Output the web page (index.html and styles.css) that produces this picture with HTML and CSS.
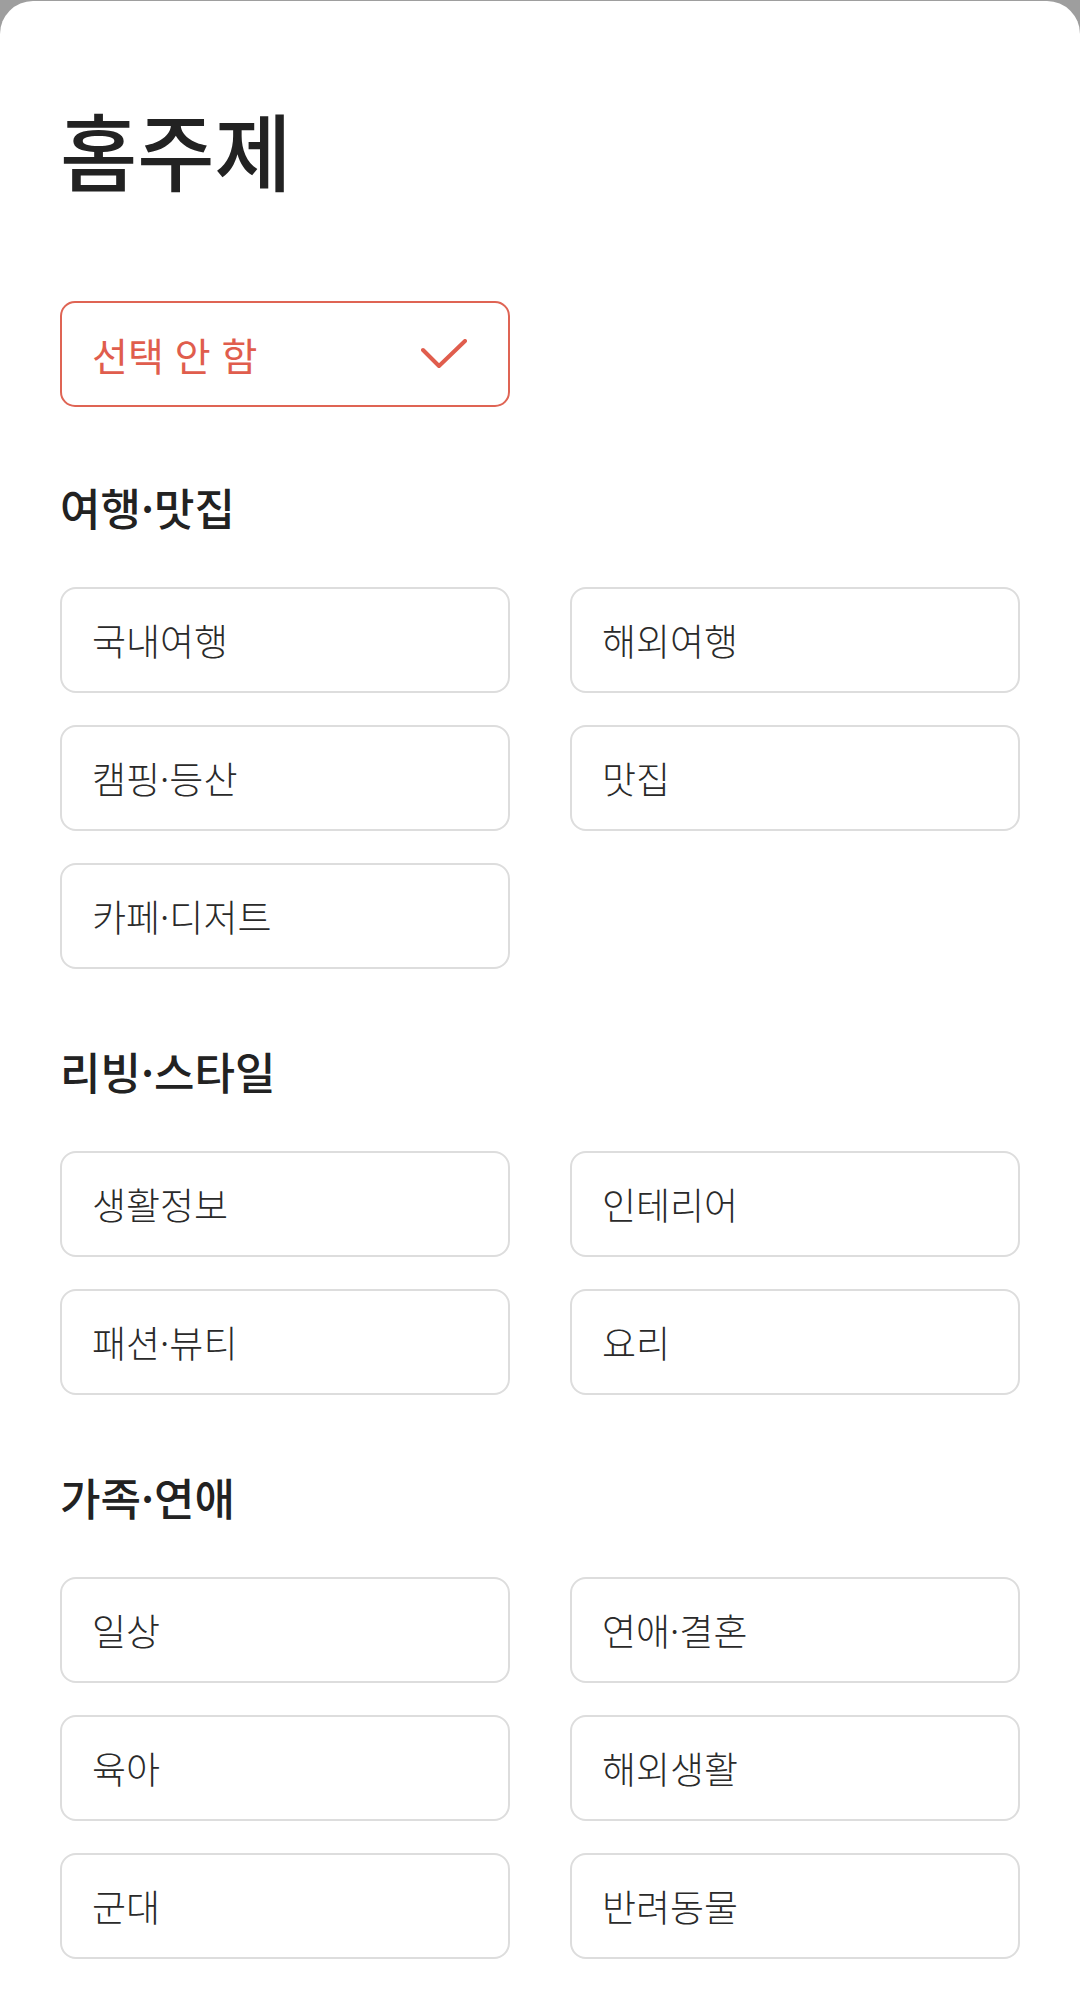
FILE: index.html
```html
<!DOCTYPE html>
<html lang="ko">
<head>
<meta charset="utf-8">
<title>홈주제</title>
<link rel="stylesheet" href="styles.css">
</head>
<body>
<div class="sheet">
  <h1 class="title">홈주제</h1>

  <div class="select is-selected">
    <span class="select-label">선택 안 함</span>
    <svg class="check" width="46" height="31" viewBox="0 0 46 31"><path d="M2 11 L18 27 L44 2" fill="none" stroke="#e05d4d" stroke-width="4" stroke-linecap="round" stroke-linejoin="round"/></svg>
  </div>

  <section class="group">
    <h2 class="group-title">여행·맛집</h2>
    <div class="grid">
      <div class="chip">국내여행</div>
      <div class="chip">해외여행</div>
      <div class="chip">캠핑·등산</div>
      <div class="chip">맛집</div>
      <div class="chip">카페·디저트</div>
    </div>
  </section>

  <section class="group">
    <h2 class="group-title">리빙·스타일</h2>
    <div class="grid">
      <div class="chip">생활정보</div>
      <div class="chip">인테리어</div>
      <div class="chip">패션·뷰티</div>
      <div class="chip">요리</div>
    </div>
  </section>

  <section class="group">
    <h2 class="group-title">가족·연애</h2>
    <div class="grid">
      <div class="chip">일상</div>
      <div class="chip">연애·결혼</div>
      <div class="chip">육아</div>
      <div class="chip">해외생활</div>
      <div class="chip">군대</div>
      <div class="chip">반려동물</div>
    </div>
  </section>
</div>
</body>
</html>
```

FILE: styles.css
```css
html, body {
  margin: 0;
  padding: 0;
}
body {
  background: #9e9e9e;
  padding-top: 1px;
  font-family: "Noto Sans CJK KR", "Noto Sans", sans-serif;
}
.sheet {
  background: #ffffff;
  border-radius: 33px 33px 0 0;
  padding: 0 60px 60px;
  min-height: 2004px;
  box-sizing: border-box;
}
.title {
  margin: 0;
  padding-top: 93px;
  font-size: 84px;
  line-height: 110px;
  font-weight: 500;
  color: #222222;
}
.select {
  margin-top: 97px;
  width: 450px;
  height: 106px;
  box-sizing: border-box;
  border: 2px solid #df6454;
  border-radius: 15px;
  display: flex;
  align-items: center;
  justify-content: space-between;
  padding: 0 41px 0 30px;
}
.select-label {
  font-size: 39px;
  color: #e05d4d;
  font-weight: 400;
}
.check {
  display: block;
}
.group {
  margin-top: 72px;
}
.group:first-of-type {
  margin-top: 70px;
}
.group-title {
  margin: 0 0 50px;
  font-size: 44px;
  line-height: 60px;
  font-weight: 500;
  color: #222222;
}
.grid {
  display: grid;
  grid-template-columns: 1fr 1fr;
  column-gap: 60px;
  row-gap: 32px;
}
.chip {
  height: 106px;
  box-sizing: border-box;
  border: 2px solid #dddddd;
  border-radius: 16px;
  display: flex;
  align-items: center;
  padding: 0 30px;
  font-size: 37px;
  font-weight: 300;
  color: #2a2a2a;
}
```
